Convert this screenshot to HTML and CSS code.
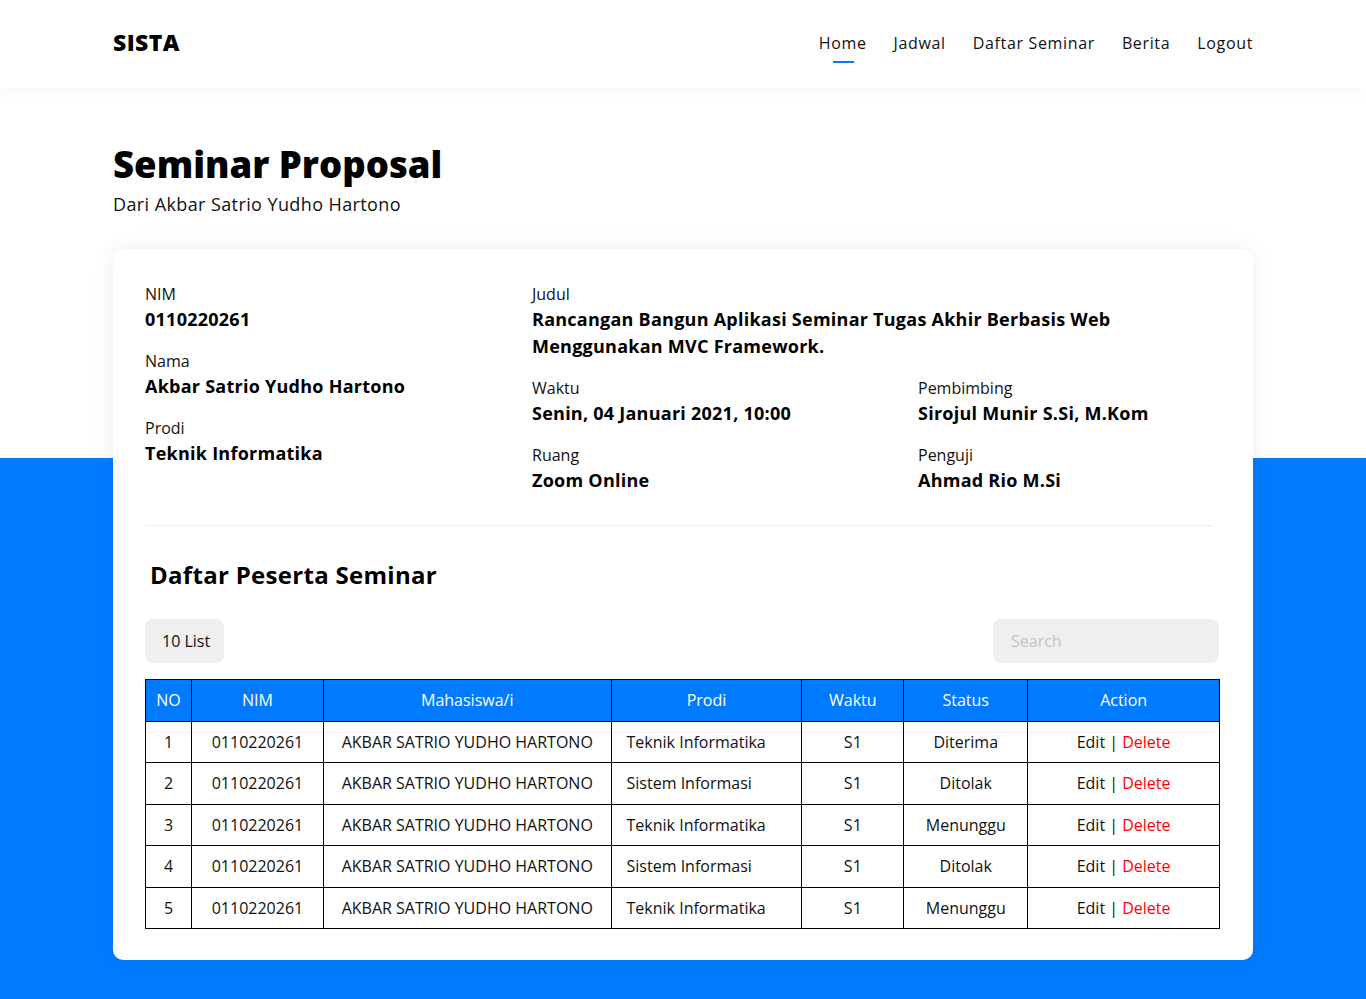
FILE: index.html
```html
<!DOCTYPE html>
<html lang="id">
<head>
<meta charset="utf-8">
<title>SISTA - Seminar Proposal</title>
<link rel="stylesheet" href="styles.css">
</head>
<body>
<header class="topbar">
  <div class="container topbar-inner">
    <a class="brand" href="#">SISTA</a>
    <nav class="nav">
      <a class="nav-link active" href="#">Home</a>
      <a class="nav-link" href="#">Jadwal</a>
      <a class="nav-link" href="#">Daftar Seminar</a>
      <a class="nav-link" href="#">Berita</a>
      <a class="nav-link" href="#">Logout</a>
    </nav>
  </div>
</header>
<main class="main">
  <div class="container">
    <h1 class="page-title">Seminar Proposal</h1>
    <p class="page-sub">Dari Akbar Satrio Yudho Hartono</p>

    <section class="card">
      <div class="info-grid">
        <div class="info-col">
          <div class="field"><div class="label">NIM</div><div class="value">0110220261</div></div>
          <div class="field"><div class="label">Nama</div><div class="value">Akbar Satrio Yudho Hartono</div></div>
          <div class="field"><div class="label">Prodi</div><div class="value">Teknik Informatika</div></div>
        </div>
        <div class="info-right">
          <div class="field"><div class="label">Judul</div><div class="value">Rancangan Bangun Aplikasi Seminar Tugas Akhir Berbasis Web Menggunakan MVC Framework.</div></div>
          <div class="info-pair">
            <div class="info-col">
              <div class="field"><div class="label">Waktu</div><div class="value">Senin, 04 Januari 2021, 10:00</div></div>
              <div class="field"><div class="label">Ruang</div><div class="value">Zoom Online</div></div>
            </div>
            <div class="info-col">
              <div class="field"><div class="label">Pembimbing</div><div class="value">Sirojul Munir S.Si, M.Kom</div></div>
              <div class="field"><div class="label">Penguji</div><div class="value">Ahmad Rio M.Si</div></div>
            </div>
          </div>
        </div>
      </div>

      <hr class="divider">

      <h2 class="section-title">Daftar Peserta Seminar</h2>

      <div class="toolbar">
        <button class="list-btn" type="button">10 List</button>
        <input class="search" type="text" placeholder="Search">
      </div>

      <table class="table">
        <thead>
          <tr>
            <th class="c-no">NO</th>
            <th class="c-nim">NIM</th>
            <th class="c-name">Mahasiswa/i</th>
            <th class="c-prodi">Prodi</th>
            <th class="c-waktu">Waktu</th>
            <th class="c-status">Status</th>
            <th class="c-action">Action</th>
          </tr>
        </thead>
        <tbody>
          <tr><td>1</td><td>0110220261</td><td>AKBAR SATRIO YUDHO HARTONO</td><td class="left">Teknik Informatika</td><td>S1</td><td>Diterima</td><td>Edit | <span class="del">Delete</span></td></tr>
          <tr><td>2</td><td>0110220261</td><td>AKBAR SATRIO YUDHO HARTONO</td><td class="left">Sistem Informasi</td><td>S1</td><td>Ditolak</td><td>Edit | <span class="del">Delete</span></td></tr>
          <tr><td>3</td><td>0110220261</td><td>AKBAR SATRIO YUDHO HARTONO</td><td class="left">Teknik Informatika</td><td>S1</td><td>Menunggu</td><td>Edit | <span class="del">Delete</span></td></tr>
          <tr><td>4</td><td>0110220261</td><td>AKBAR SATRIO YUDHO HARTONO</td><td class="left">Sistem Informasi</td><td>S1</td><td>Ditolak</td><td>Edit | <span class="del">Delete</span></td></tr>
          <tr><td>5</td><td>0110220261</td><td>AKBAR SATRIO YUDHO HARTONO</td><td class="left">Teknik Informatika</td><td>S1</td><td>Menunggu</td><td>Edit | <span class="del">Delete</span></td></tr>
        </tbody>
      </table>
    </section>
  </div>
</main>
</body>
</html>
```
FILE: styles.css
```css
* { box-sizing: border-box; }
html, body { margin: 0; padding: 0; }
body {
  font-family: "Open Sans", "Noto Sans", sans-serif;
  color: #111;
  background: #007bff;
}
.container { width: 1140px; margin: 0 auto; }

.topbar {
  background: #fff;
  height: 88px;
  position: relative;
  z-index: 2;
  box-shadow: 0 4px 14px rgba(0,0,0,0.035);
}
.topbar-inner {
  height: 88px;
  display: flex;
  align-items: center;
  justify-content: space-between;
  padding-bottom: 2px;
}
.brand {
  font-size: 23px;
  font-weight: 800;
  color: #000;
  text-decoration: none;
  letter-spacing: 0.4px;
  margin-bottom: 2px;
}
.nav { display: flex; gap: 27px; }
.nav-link {
  font-size: 16px;
  letter-spacing: 0.65px;
  color: #111;
  text-decoration: none;
  position: relative;
  line-height: 24px;
}
.nav-link.active::after {
  content: "";
  position: absolute;
  left: 50%;
  bottom: -8px;
  width: 21px;
  margin-left: -10px;
  height: 2px;
  background: #007bff;
}

.main {
  background: linear-gradient(to bottom, #fff 0, #fff 370px, #007bff 370px);
  min-height: 911px;
  padding-top: 56px;
  padding-bottom: 39px;
}
.page-title {
  margin: 0;
  font-size: 36.5px;
  font-weight: 800;
  line-height: 40px;
  color: #000;
}
.page-sub {
  margin: 6px 0 0;
  font-size: 18px;
  line-height: 28px;
  letter-spacing: 0.4px;
  color: #111;
}

.card {
  margin-top: 31px;
  background: #fff;
  border-radius: 10px;
  box-shadow: 0 0 24px rgba(0,0,0,0.07);
  padding: 33px 32px 31px;
}
.info-grid {
  display: grid;
  grid-template-columns: 387px 1fr;
}
.info-pair {
  display: grid;
  grid-template-columns: 386px 1fr;
}
.field { margin-bottom: 16px; }
.label {
  font-size: 16px;
  line-height: 24px;
  color: #111;
}
.value {
  font-size: 18px;
  font-weight: 700;
  line-height: 27px;
  letter-spacing: 0.25px;
  color: #000;
}
.info-right .field:first-child .value { max-width: 620px; }

.divider {
  border: 0;
  border-top: 1px solid #ececec;
  margin: 15px 8px 0 0;
}
.section-title {
  margin: 33px 0 0 5px;
  font-size: 24px;
  font-weight: 700;
  line-height: 32px;
  letter-spacing: 0.3px;
  color: #000;
}
.toolbar {
  margin-top: 28px;
  display: flex;
  justify-content: space-between;
  align-items: center;
  padding-right: 2px;
}
.list-btn {
  font-family: inherit;
  font-size: 16px;
  color: #111;
  background: #efefef;
  border: 0;
  border-radius: 8px;
  height: 44px;
  padding: 0 14px 0 17px;
}
.search {
  font-family: inherit;
  font-size: 16px;
  width: 226px;
  height: 44px;
  background: #efefef;
  border: 0;
  border-radius: 8px;
  padding: 0 18px;
  color: #111;
  outline: none;
}
.search::placeholder { color: #c4c4c4; }

.table {
  margin-top: 16px;
  width: 1075px;
  border-collapse: collapse;
  font-size: 16px;
}
.table th, .table td {
  border: 1px solid #000;
  text-align: center;
  height: 41.5px;
  padding: 0 8px;
  font-weight: 400;
}
.table th {
  background: #007bff;
  color: #fff;
}
.table td { color: #111; }
.table td.left { text-align: left; padding-left: 15px; }
.c-no { width: 46px; }
.c-nim { width: 132px; }
.c-name { width: 288px; }
.c-prodi { width: 191px; }
.c-waktu { width: 102px; }
.c-status { width: 124px; }
.c-action { width: 192px; }
.del { color: #f00; }
```
